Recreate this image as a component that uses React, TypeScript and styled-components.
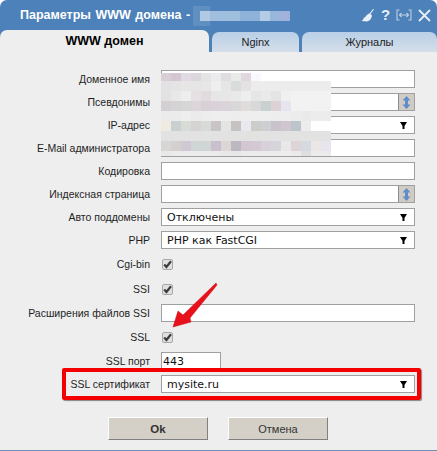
import React from "react";
import styled, { createGlobalStyle } from "styled-components";

const Global = createGlobalStyle`
  html, body { margin: 0; padding: 0; background: #fff; }
  body { font-family: "Liberation Sans", "Noto Sans", sans-serif; }
`;

const Window = styled.div`
  position: relative;
  width: 437px;
  height: 451px;
  box-sizing: border-box;
  display: flex;
  flex-direction: column;
  background: #eeeeee;
  border-bottom: 1px solid #6f8fb2;
  border-radius: 7px 7px 0 0;
  overflow: hidden;
`;

const Header = styled.div`
  height: 52px;
  flex: none;
  background: #4d81b9;
  display: flex;
  flex-direction: column;
`;

const TitleBar = styled.div`
  height: 30px;
  flex: none;
  display: flex;
  align-items: center;
  padding: 0 6px 0 20px;
`;

const Title = styled.div`
  flex: 1;
  color: #fff;
  font-size: 12.5px;
  font-weight: 700;
  white-space: nowrap;
  word-spacing: 1px;
`;

const Tools = styled.div`
  display: flex;
  align-items: center;
  gap: 6px;
  height: 16px;
`;

const QuestionMark = styled.span`
  color: #e6eef6;
  font-size: 15px;
  font-weight: 700;
  line-height: 16px;
  width: 9px;
  text-align: center;
`;

const Tabs = styled.div`
  flex: 1;
  display: flex;
  align-items: flex-end;
  gap: 3px;
`;

const Tab = styled.div<{ $width: number; $active?: boolean }>`
  width: ${(p) => p.$width}px;
  height: ${(p) => (p.$active ? 22 : 20)}px;
  box-sizing: border-box;
  flex: none;
  display: flex;
  align-items: center;
  justify-content: center;
  border-radius: 7px 7px 0 0;
  font-size: ${(p) => (p.$active ? 12.5 : 11)}px;
  font-weight: ${(p) => (p.$active ? 700 : 400)};
  color: ${(p) => (p.$active ? "#000" : "#222")};
  background: ${(p) =>
    p.$active ? "#eeeeee" : "linear-gradient(#b9d0e8, #d4dee8)"};
`;

const Form = styled.div`
  position: relative;
  flex: 1;
  display: flex;
  flex-direction: column;
  gap: 5px;
  padding-top: 18px;
`;

const Row = styled.div<{ $check?: boolean }>`
  display: grid;
  grid-template-columns: 150px auto;
  column-gap: 11px;
  justify-content: start;
  align-items: center;
  height: ${(p) => (p.$check ? 20 : 18)}px;
`;

const Label = styled.div`
  text-align: right;
  font-size: 10.5px;
  color: #1e1e1e;
  white-space: nowrap;
`;

const Field = styled.div<{ $width?: number }>`
  position: relative;
  width: ${(p) => p.$width ?? 254}px;
  height: 18px;
  box-sizing: border-box;
  background: #fff;
  border: 1px solid #a0a0a0;
  display: flex;
  align-items: center;
  padding: 0 4px;
  font-family: "DejaVu Sans", sans-serif;
  font-size: 11px;
  color: #111;
`;

const PlainValue = styled.span`
  margin-left: -3px;
`;

const SelectValue = styled.span`
  padding-left: 1px;
`;

const Spinner = styled.div`
  position: absolute;
  right: 0;
  top: 0;
  bottom: 0;
  width: 15px;
  background: #d0ccc4;
  border-left: 1px solid #8c8c8c;
  display: flex;
  align-items: center;
  justify-content: center;
`;

const ArrowSlot = styled.div`
  position: absolute;
  right: 7px;
  top: 5px;
  width: 7px;
  height: 7px;
  display: flex;
`;

const Check = styled.div`
  width: 11px;
  height: 11px;
  margin-left: 1px;
  box-sizing: border-box;
  border: 1px solid #a8a8a8;
  border-radius: 2px;
  background: #e0e0e0;
  display: flex;
  align-items: center;
  justify-content: center;
`;

const Buttons = styled.div`
  display: flex;
  justify-content: center;
  gap: 20px;
  margin-top: 19px;
  padding-right: 1px;
`;

const Btn = styled.div<{ $primary?: boolean }>`
  width: 100px;
  height: 23px;
  box-sizing: border-box;
  background: #d4d0c8;
  border: 1px solid;
  border-color: #fff #808080 #808080 #fff;
  display: flex;
  align-items: center;
  justify-content: center;
  font-size: ${(p) => (p.$primary ? 11.5 : 11)}px;
  font-weight: ${(p) => (p.$primary ? 700 : 400)};
  color: #333;
`;

const Highlight = styled.div`
  position: absolute;
  left: 62px;
  top: 316px;
  width: 359px;
  height: 32px;
  box-sizing: border-box;
  border: 4px solid #f40000;
  border-radius: 2px;
  box-shadow: 1px 1px 1px rgba(0, 0, 0, 0.45);
  pointer-events: none;
`;

const Overlay = styled.svg<{ $left: number; $top: number }>`
  position: absolute;
  left: ${(p) => p.$left}px;
  top: ${(p) => p.$top}px;
  pointer-events: none;
`;

const formRows: { y: number; h: number; cells: string[] }[] = [
  { y: 3, h: 8, cells: ["d8ced6", "d4c6d2", "e0dae2", "ddd6df", "e4e4e4", "ebeaee", "e0dcdf", "e8ebe8", "e0d8de", "f8f9ff"] },
  { y: 11, h: 10, cells: ["e2e2e4", "e6e3e5", "e6e6e4", "e6e5e5", "e6e6e6", "eeeeee", "e6e6e6", "d8dcda", "e4e2e2", "ececec", "ececec", "ececec", "ececec", "ececec", "ececec", "ececec", "ececec"] },
  { y: 21, h: 10, cells: ["e2e2e2", "e8e8e8", "eeeeee", "e6dfe4", "e2dadd", "e6e6e6", "e8e7e7", "e9e9e9", "eeeeee", "e6e6e6", "eaeaea", "e4e4e4", "f0f0f0", "f2f2f2", "f2f2f2", "f2f2f2", "f2f2f2"] },
  { y: 31, h: 10, cells: ["d4cfd2", "d6d3d6", "d6d6d6", "dcd6da", "d8d0d6", "dad2da", "dad3da", "d8d8d8", "e0dcdc", "d8d8d8", "c8d0d0", "dcd2d6", "e8e4ee", "f2f2f2", "f2f2f2", "f2f2f2", "f2f2f2"] },
  { y: 41, h: 10, cells: ["ebebeb", "ebebeb", "eeeeee", "ebebeb", "ededed", "eeeeee", "eeeeee", "ededed", "eeeeee", "eeeeee", "eeeeee", "ededed", "eeeeee", "ececec", "eaeaea", "ececec", "ececec"] },
  { y: 51, h: 10, cells: ["efeae2", "c8d0d0", "d8dcd6", "d6d4d2", "d6dad8", "c8c4c8", "e4e6e4", "c6c2c2", "e8e8ee", "ccccc8", "ccd0d2", "c8c2ca", "d0c6d2", "bcc4cc", "ececec"] },
  { y: 61, h: 10, cells: Array(17).fill("e2e2e2") },
  { y: 71, h: 10, cells: ["d6d6d4", "d4d0d0", "d0c8d2", "d0d6d6", "d0d6d6", "c8c0cc", "dcd6d6", "bcb8c0", "d2c6d2", "d4c8d2", "d6d0da", "d8d4dc", "e8e8e8", "dcd4d6", "d4dae0", "ece6e6", "e8e4ee"] },
  { y: 81, h: 5, cells: ["e8e8e8", "ebebeb", "ebebeb", "ebebeb", "ebebeb", "ebebeb", "e8e8e8", "e6e8e8", "ebebeb", "ebebeb", "ebebeb", "ebebeb", "ededed", "ebebeb", "e0dede", "ebebeb", "ebebeb"] },
];

const titleCells: [number, number, string][] = [
  [0, 10, "b0cae4"],
  [10, 30, "a0bedd"],
  [40, 20, "8fb2d8"],
  [60, 10, "b4cde6"],
  [70, 10, "98b6da"],
  [80, 10, "a0b2dc"],
];

const Sweep = () => (
  <svg width="14" height="13" viewBox="0 0 14 13">
    <path d="M13 0.5 L9.5 5 L11 6.5 C10.5 10 8.5 12 6 12.5 L0.5 12 C2 11 3 9.5 2.5 9 C4 8.8 5 6.5 7.5 4.8 L8.8 4.3 L12 0 Z" fill="#e8f0f8" />
  </svg>
);

const Fit = () => (
  <svg width="16" height="12" viewBox="0 0 16 12" fill="none" stroke="#bcd0e4" strokeWidth="1.1">
    <path d="M3.5 1 H1 V11 H3.5 M12.5 1 H15 V11 H12.5" />
    <path d="M3.5 6 H12.5 M5.5 4 L3.5 6 L5.5 8 M10.5 4 L12.5 6 L10.5 8" />
  </svg>
);

const Close = () => (
  <svg width="13" height="13" viewBox="0 0 13 13" fill="none" stroke="#e6eef6" strokeWidth="1.8">
    <path d="M1 1 L12 12 M12 1 L1 12" />
  </svg>
);

const UpDown = () => (
  <svg width="9" height="13" viewBox="0 0 9 13">
    <path d="M4.5 0 L8.5 4.5 H6 V8.5 H8.5 L4.5 13 L0.5 8.5 H3 V4.5 H0.5 Z" fill="#5f8ccb" />
  </svg>
);

const DownArrow = () => (
  <svg width="7" height="7" viewBox="0 0 7 7">
    <path d="M0 0 H7 L4.5 4 V7 H2.5 V4 Z" fill="#000" />
  </svg>
);

const Tick = () => (
  <svg width="9" height="9" viewBox="0 0 9 9" fill="none" stroke="#3c3c3c" strokeWidth="2.2">
    <path d="M1.2 4.6 L3.4 7 L8 1.2" />
  </svg>
);

const CheckRow = ({ label }: { label: string }) => (
  <Row $check>
    <Label>{label}</Label>
    <Check>
      <Tick />
    </Check>
  </Row>
);

const TextRow = ({ label, value, width }: { label: string; value?: string; width?: number }) => (
  <Row>
    <Label>{label}</Label>
    <Field $width={width}>{value && <PlainValue>{value}</PlainValue>}</Field>
  </Row>
);

const SpinRow = ({ label }: { label: string }) => (
  <Row>
    <Label>{label}</Label>
    <Field>
      <Spinner>
        <UpDown />
      </Spinner>
    </Field>
  </Row>
);

const SelectRow = ({ label, value }: { label: string; value?: string }) => (
  <Row>
    <Label>{label}</Label>
    <Field>
      {value && <SelectValue>{value}</SelectValue>}
      <ArrowSlot>
        <DownArrow />
      </ArrowSlot>
    </Field>
  </Row>
);

export default function App() {
  return (
    <>
      <Global />
      <Window>
        <Header>
          <TitleBar>
            <Title>Параметры WWW домена -</Title>
            <Tools>
              <Sweep />
              <QuestionMark>?</QuestionMark>
              <Fit />
              <Close />
            </Tools>
          </TitleBar>
          <Tabs>
            <Tab $width={209} $active>
              WWW домен
            </Tab>
            <Tab $width={87}>Nginx</Tab>
            <Tab $width={135}>Журналы</Tab>
          </Tabs>
        </Header>
        <Overlay $left={193} $top={6} width="100" height="20">
          <rect x="0" y="0" width="17" height="20" fill="#6a96c6" opacity="0.7" />
          {titleCells.map(([x, w, c]) => (
            <rect key={x} x={x + 7} y="5" width={w} height="10" fill={`#${c}`} />
          ))}
        </Overlay>
        <Form>
          <TextRow label="Доменное имя" />
          <SpinRow label="Псевдонимы" />
          <SelectRow label="IP-адрес" />
          <TextRow label="E-Mail администратора" />
          <TextRow label="Кодировка" />
          <SpinRow label="Индексная страница" />
          <SelectRow label="Авто поддомены" value="Отключены" />
          <SelectRow label="PHP" value="PHP как FastCGI" />
          <CheckRow label="Cgi-bin" />
          <CheckRow label="SSI" />
          <TextRow label="Расширения файлов SSI" />
          <CheckRow label="SSL" />
          <TextRow label="SSL порт" value="443" width={60} />
          <SelectRow label="SSL сертификат" value="mysite.ru" />
          <Buttons>
            <Btn $primary>Ok</Btn>
            <Btn>Отмена</Btn>
          </Buttons>
          <Overlay $left={161} $top={18} width="170" height="88">
            {formRows.map((r) =>
              r.cells.map((c, i) => (
                <rect key={`${r.y}-${i}`} x={i * 10} y={r.y} width="10" height={r.h} fill={`#${c}`} />
              ))
            )}
          </Overlay>
          <Highlight />
          <Overlay $left={165} $top={227} width="60" height="52">
            <polygon
              points="51,4 52,6 25,39 26,43 8,48 13,32 18,36"
              fill="#e8101a"
              stroke="#c8101a"
              strokeWidth="0.5"
            />
          </Overlay>
        </Form>
      </Window>
    </>
  );
}
